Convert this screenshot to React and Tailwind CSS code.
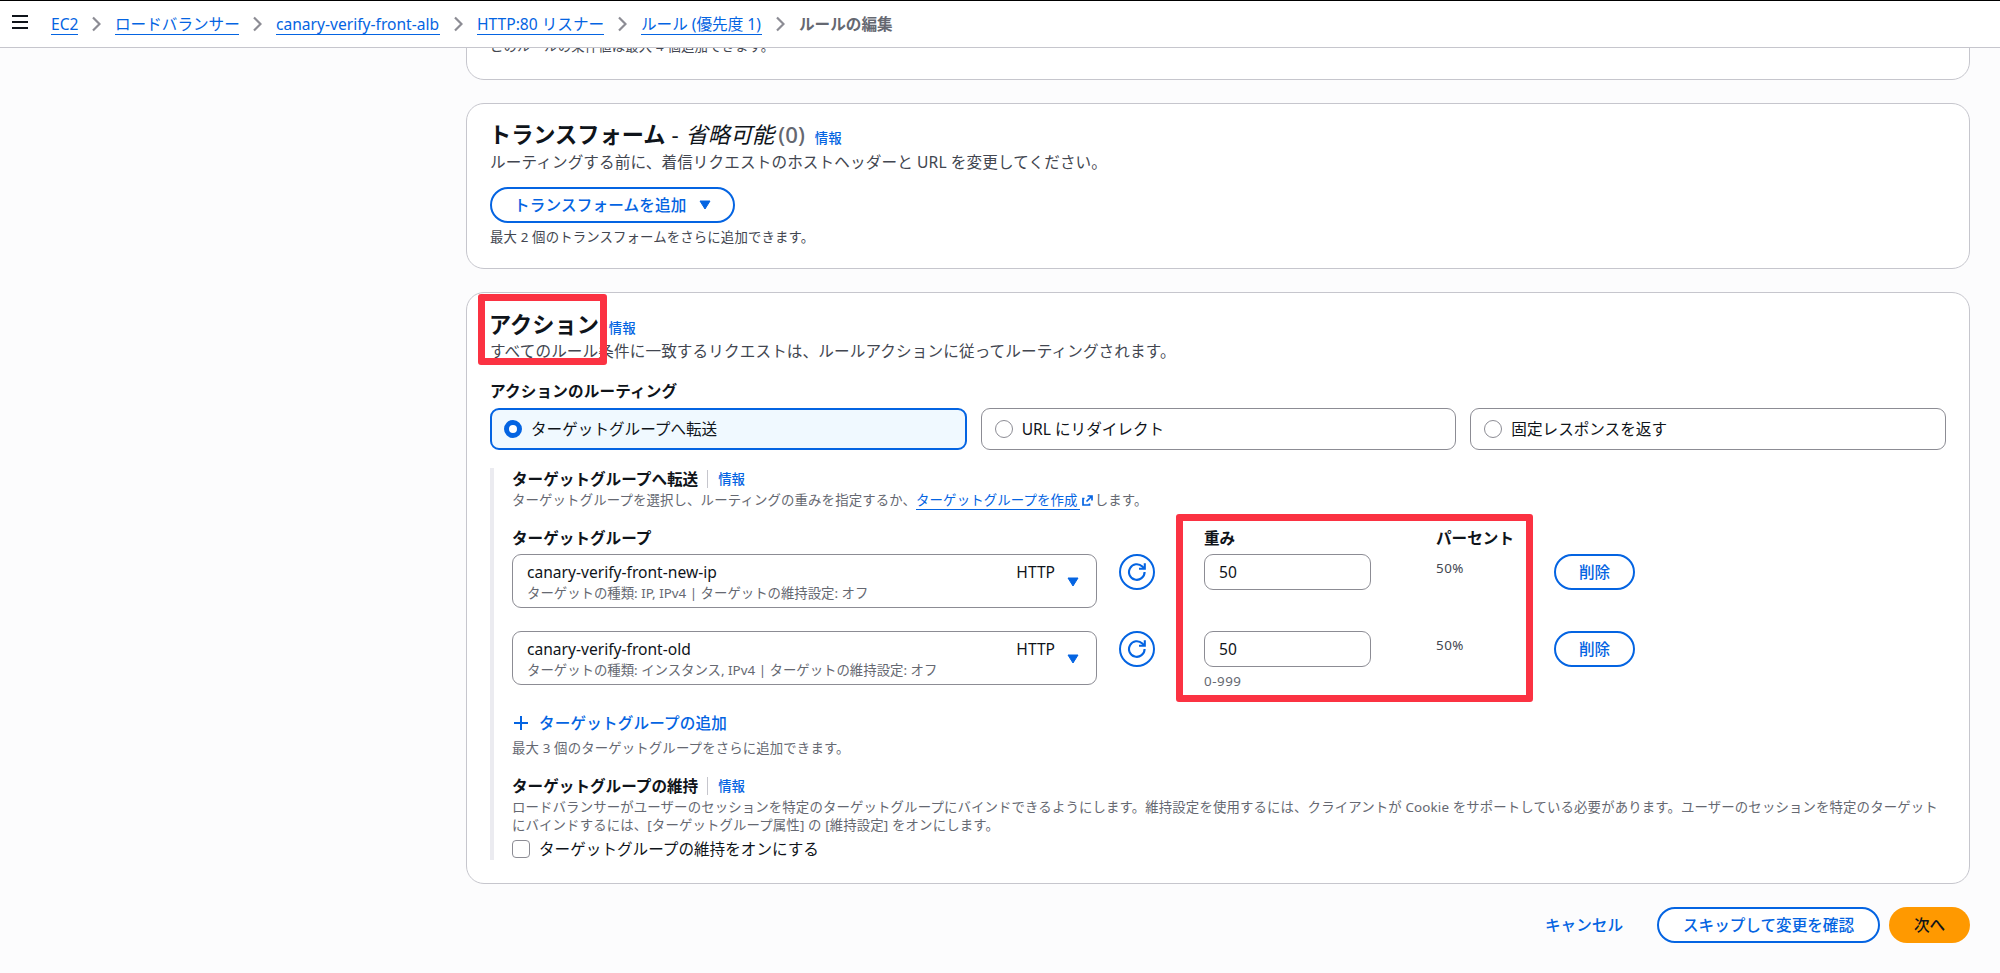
import React from 'react'

const crumbs = [
  { label: 'EC2', width: 'w-[27px]' },
  { label: 'ロードバランサー', width: 'w-[124px]' },
  { label: 'canary-verify-front-alb', width: 'w-[164px]' },
  { label: 'HTTP:80 リスナー', width: 'w-[127px]' },
  { label: 'ルール (優先度 1)', width: 'w-[121px]' },
]

const actions = [
  { label: 'ターゲットグループへ転送', selected: true },
  { label: 'URL にリダイレクト' },
  { label: '固定レスポンスを返す' },
]

const targetGroups = [
  {
    name: 'canary-verify-front-new-ip',
    detail: 'ターゲットの種類: IP, IPv4 | ターゲットの維持設定: オフ',
    weight: 50,
    percent: '50%',
  },
  {
    name: 'canary-verify-front-old',
    detail: 'ターゲットの種類: インスタンス, IPv4 | ターゲットの維持設定: オフ',
    weight: 50,
    percent: '50%',
  },
]

const Chevron = () => (
  <svg className="w-[9px] h-[16px] mx-[14px] shrink-0" viewBox="0 0 9 16" fill="none" stroke="#8c8c94" strokeWidth="2.2">
    <path d="M1 1.5 7.5 8 1 14.5" />
  </svg>
)

const Caret = ({ className }) => (
  <svg className={`w-[12px] h-[10px] shrink-0 ${className}`} viewBox="0 0 12 10" fill="#0464e2" stroke="#0464e2" strokeLinejoin="round">
    <path d="M1 1h10L6 9z" />
  </svg>
)

const Info = ({ className = '' }) => (
  <a className={`text-[13.4px] leading-[18px] font-medium text-[#0464e2] ${className}`}>情報</a>
)

const RefreshButton = () => (
  <button className="w-9 h-9 shrink-0 rounded-full border-2 border-[#0464e2] flex items-center justify-center">
    <svg className="w-[20px] h-[20px]" viewBox="0 0 20 20" fill="none" stroke="#0464e2" strokeWidth="2.1">
      <path d="M17.6 10A7.8 7.8 0 1 1 15.300 4.500L17.400 6.500" />
      <path d="M17.800 1.200v5.500h-5.800" />
    </svg>
  </button>
)

const Card = ({ className = '', children }) => (
  <section className={`relative bg-white border border-[#c6c6cd] rounded-[18px] px-[23px] ${className}`}>
    {children}
  </section>
)

const ActionTile = ({ label, selected }) => (
  <label
    className={`flex-1 h-[42px] rounded-[9px] flex items-center ${
      selected ? 'border-2 border-[#0464e2] bg-[#f0f9ff] pl-3' : 'border border-[#8c8c94] pl-[13px]'
    }`}
  >
    <span
      className={`w-[18px] h-[18px] mr-[9px] rounded-full bg-white ${
        selected ? 'border-[5px] border-[#0464e2]' : 'border border-[#8c8c94]'
      }`}
    />
    {label}
  </label>
)

const TargetGroupRow = ({ group, constraint }) => (
  <div className="flex items-start h-[77px]">
    <div className="w-[585px] h-[54px] shrink-0 border border-[#8c8c94] rounded-[9px] pl-[14px] pr-[17px] flex">
      <div className="flex-1 pt-[7px]">
        <div className="leading-[21px]">{group.name}</div>
        <div className="text-[13.4px] leading-[20px] text-[#656871]">{group.detail}</div>
      </div>
      <div className="pt-[7px] leading-[21px]">HTTP</div>
      <Caret className="ml-[12px] mt-[22px]" />
    </div>
    <div className="ml-[22px]">
      <RefreshButton />
    </div>
    <div className="w-[232px] ml-[49px]">
      <div className="w-[167px] h-9 border border-[#8c8c94] rounded-[9px] px-[14px] leading-[34px]">{group.weight}</div>
      {constraint && <div className="mt-[5px] text-[13.4px] leading-[18px] tracking-[0.5px] text-[#656871]">{constraint}</div>}
    </div>
    <div className="w-[118px] pt-[5px] text-[13.4px] leading-[18px] tracking-[0.5px] text-[#424650]">{group.percent}</div>
    <button className="w-[81px] h-9 rounded-full border-2 border-[#0464e2] text-[#0464e2] font-medium">削除</button>
  </div>
)

const App = () => (
  <div className="w-[2000px] h-[973px] overflow-hidden bg-[#fcfcfd] flex flex-col font-['Noto_Sans','Noto_Sans_CJK_JP',sans-serif] text-[15.6px] leading-[22px] text-[#0f141a] whitespace-nowrap">
    {/* Breadcrumb bar */}
    <header className="h-12 shrink-0 bg-white border-t border-t-black border-b border-b-[#c6c6cd] flex items-start pl-3">
      <svg className="w-4 h-[14px] mt-[14px] mr-[23px]" viewBox="0 0 16 14" fill="none" stroke="#0f141a" strokeWidth="1.8">
        <path d="M0 1h16M0 7h16M0 13h16" />
      </svg>
      <nav className="flex items-center mt-[12px] h-[22px]">
        {crumbs.map((crumb) => (
          <React.Fragment key={crumb.label}>
            <a className={`${crumb.width} h-[22px] border-b border-[#0464e2] text-[#0464e2]`}>{crumb.label}</a>
            <Chevron />
          </React.Fragment>
        ))}
        <span className="font-bold text-[#656871]">ルールの編集</span>
      </nav>
    </header>

    <main className="w-[1504px] ml-[466px]">
      <div className="h-8 overflow-hidden">
        <Card className="h-[132px] -mt-[100px] pt-[88px]">
          <div className="text-[13.4px] leading-[18px] tracking-[0.14px] text-[#424650]">このルールの条件値は最大 4 個追加できます。</div>
        </Card>
      </div>

      {/* Transform */}
      <Card className="mt-[23px] h-[166px] pt-[17px]">
        <h2 className="flex items-baseline text-[22.2px] leading-[28px] font-bold -ml-px">
          トランスフォーム<span className="font-normal ml-[6px]">-</span>
          <em className="font-normal ml-[7px]">省略可能</em>
          <span className="font-medium text-[#656871] ml-[4px]">(0)</span>
          <Info className="ml-[10px]" />
        </h2>
        <p className="mt-[2px] tracking-[0.12px] text-[#424650]">ルーティングする前に、着信リクエストのホストヘッダーと URL を変更してください。</p>
        <button className="mt-[14px] w-[245px] h-[36px] rounded-full border-2 border-[#0464e2] text-[#0464e2] font-medium tracking-[0.15px] flex items-center pl-[22px]">
          トランスフォームを追加
          <Caret className="ml-[13px]" />
        </button>
        <p className="mt-[5px] text-[13.4px] leading-[18px] tracking-[0.14px] text-[#424650]">最大 2 個のトランスフォームをさらに追加できます。</p>
      </Card>

      {/* Actions */}
      <Card className="mt-[23px] h-[592px] pt-[18px]">
        <h2 className="flex items-baseline text-[22.2px] leading-[28px] font-bold -ml-px">
          アクション
          <Info className="ml-[10px]" />
        </h2>
        <p className="mt-px tracking-[0.12px] text-[#424650]">
          すべてのルール条件に一致するリクエストは、ルールアクションに従ってルーティングされます。
        </p>
        <h3 className="mt-[18px] font-bold tracking-[0.15px]">アクションのルーティング</h3>
        <div className="mt-[6px] flex gap-[14px]">
          {actions.map((action) => (
            <ActionTile key={action.label} {...action} />
          ))}
        </div>

        <div className="mt-[18px] h-[392px] border-l-[4px] border-[#ebebf0] pl-[18px]">
          <div className="flex items-center">
            <h3 className="font-bold">ターゲットグループへ転送</h3>
            <span className="w-px h-[18px] bg-[#c6c6cd] ml-[9px] mr-[10px]" />
            <Info />
          </div>
          <p className="flex text-[13.4px] leading-[18px] tracking-[0.14px] text-[#656871] mt-[1px]">
            ターゲットグループを選択し、ルーティングの重みを指定するか、
            <a className="border-b border-[#0464e2] text-[#0464e2] pr-[2px]">ターゲットグループを作成</a>
            <svg className="w-[11px] h-[11px] mt-[4px] ml-[2px] mr-[2px]" viewBox="0 0 11 11" fill="none" stroke="#0464e2" strokeWidth="1.7">
              <path d="M2.500 3.500H1V10h6.500V8.500M5.500 1H10v4.500M10 1 4.500 6.500" />
            </svg>
            します。
          </p>

          <div className="mt-[17px] flex font-bold">
            <span className="w-[692px]">ターゲットグループ</span>
            <span className="w-[232px]">重み</span>
            <span>パーセント</span>
          </div>
          <div className="mt-[5px]">
            <TargetGroupRow group={targetGroups[0]} />
            <TargetGroupRow group={targetGroups[1]} constraint="0-999" />
          </div>

          <button className="mt-[4px] flex items-center text-[#0464e2] font-medium tracking-[0.15px]">
            <svg className="w-[14px] h-[14px] ml-[2px] mr-[11px]" viewBox="0 0 14 14" fill="none" stroke="#0464e2" strokeWidth="2">
              <path d="M7 0v14M0 7h14" />
            </svg>
            ターゲットグループの追加
          </button>
          <p className="mt-[5px] text-[13.4px] leading-[18px] tracking-[0.14px] text-[#656871]">最大 3 個のターゲットグループをさらに追加できます。</p>

          <div className="mt-[18px] flex items-center">
            <h3 className="font-bold">ターゲットグループの維持</h3>
            <span className="w-px h-[18px] bg-[#c6c6cd] ml-[9px] mr-[10px]" />
            <Info />
          </div>
          <p className="mt-px text-[13.4px] leading-[18px] tracking-[0.14px] text-[#656871]">
            ロードバランサーがユーザーのセッションを特定のターゲットグループにバインドできるようにします。維持設定を使用するには、クライアントが Cookie をサポートしている必要があります。ユーザーのセッションを特定のターゲット
            <br />
            にバインドするには、[ターゲットグループ属性] の [維持設定] をオンにします。
          </p>
          <label className="mt-[4px] flex items-center">
            <span className="w-[18px] h-[18px] mr-[9px] rounded-[4px] border border-[#8c8c94]" />
            ターゲットグループの維持をオンにする
          </label>
        </div>

        {/* Highlight marks */}
        <div className="absolute left-[11px] top-[1px] w-[129px] h-[71px] rounded-[3px] border-[7px] border-[#fb3242]" />
        <div className="absolute left-[709px] top-[221px] w-[357px] h-[188px] rounded-[3px] border-[7px] border-[#fb3242]" />
      </Card>

      <footer className="mt-[23px] flex justify-end items-center font-medium text-[#0464e2]">
        <button className="mr-[34px]">キャンセル</button>
        <button className="w-[223px] h-9 mr-[9px] bg-white rounded-full border-2 border-[#0464e2]">スキップして変更を確認</button>
        <button className="w-[81px] h-9 rounded-full bg-[#ff9900] text-[#0f141a]">次へ</button>
      </footer>
    </main>
  </div>
)

export default App
